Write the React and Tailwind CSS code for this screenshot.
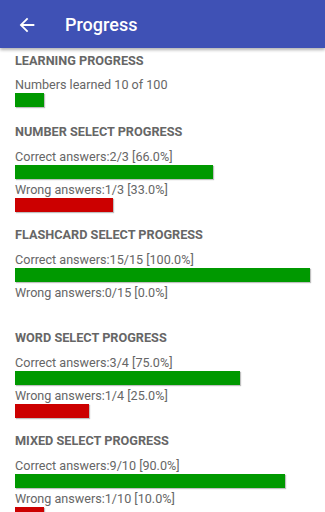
export default function App() {
  const font = { fontFamily: "Roboto, 'Noto Sans', sans-serif" };
  const Heading = ({ children, className = "" }) => (
    <div className={`text-[12.7px] leading-[16px] font-bold text-[#666666] ${className}`}>{children}</div>
  );
  const Text = ({ children, className = "" }) => (
    <div className={`text-[12.6px] leading-[16px] text-[#666666] ${className}`}>{children}</div>
  );
  const Bar = ({ w, color }) => (
    <div className="h-[14px]">
      {w > 0 && (
        <div
          className={`h-[14px] ${color === "g" ? "bg-[#009900]" : "bg-[#cc0000]"} shadow-[1px_1px_1px_rgba(0,0,0,0.25)]`}
          style={{ width: w }}
        />
      )}
    </div>
  );
  const Section = ({ title, c, cw, w, ww, className = "mt-[15px]" }) => (
    <div className={className}>
      <Heading>{title}</Heading>
      <Text className="mt-[9px]">{c}</Text>
      <Bar w={cw} color="g" />
      <Text className="mt-[3px]">{w}</Text>
      <Bar w={ww} color="r" />
    </div>
  );
  return (
    <div className="w-[325px] h-[512px] overflow-hidden bg-white" style={font}>
      <div className="h-[48px] bg-[#3f51b5] flex items-center shadow-[0_2px_3px_rgba(0,0,0,0.3)] relative z-10">
        <svg viewBox="0 0 24 24" className="w-[22px] h-[22px] ml-[16px] mt-[1px]" fill="white">
          <path d="M20 11H7.83l5.59-5.59L12 4l-8 8 8 8 1.41-1.41L7.83 13H20v-2z" />
        </svg>
        <div className="ml-[27px] mt-[2px] text-white text-[18px] font-medium leading-none">Progress</div>
      </div>
      <div className="px-[15px]">
        <div className="pt-[5px]">
          <Heading>LEARNING PROGRESS</Heading>
          <Text className="mt-[8px]">Numbers learned 10 of 100</Text>
          <Bar w={29} color="g" />
        </div>
        <Section className="mt-[17px]" title="NUMBER SELECT PROGRESS" c="Correct answers:2/3 [66.0%]" cw={198} w="Wrong answers:1/3 [33.0%]" ww={98} />
        <Section title="FLASHCARD SELECT PROGRESS" c="Correct answers:15/15 [100.0%]" cw={295} w="Wrong answers:0/15 [0.0%]" ww={0} />
        <Section title="WORD SELECT PROGRESS" c="Correct answers:3/4 [75.0%]" cw={225} w="Wrong answers:1/4 [25.0%]" ww={74} />
        <Section title="MIXED SELECT PROGRESS" c="Correct answers:9/10 [90.0%]" cw={270} w="Wrong answers:1/10 [10.0%]" ww={29} />
      </div>
    </div>
  );
}
